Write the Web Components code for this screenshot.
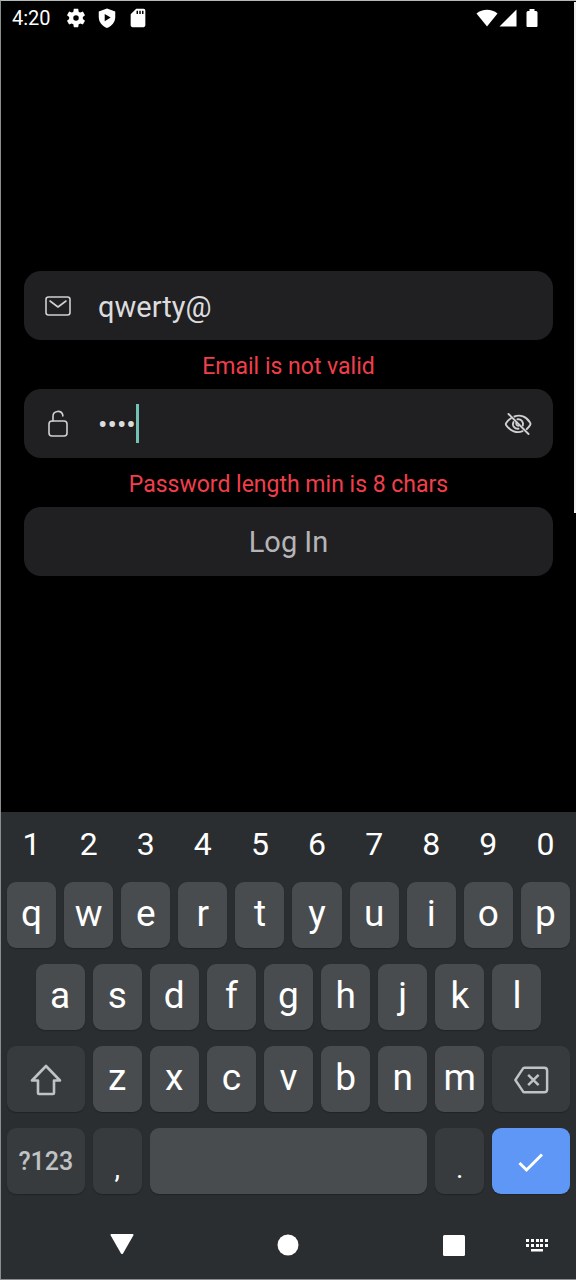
<!DOCTYPE html>
<html lang="en">
<head>
<meta charset="utf-8">
<meta name="viewport" content="width=device-width, initial-scale=1">
<title>Log In</title>
<style>
html, body { margin: 0; background: #000; }
body { font-family: Roboto, "Liberation Sans", sans-serif; color: #fff; }
</style>
</head>
<body>
<phone-screen>
  <status-bar slot="status" time="4:20"></status-bar>
  <login-form slot="main"></login-form>
  <soft-keyboard slot="keyboard"></soft-keyboard>
</phone-screen>

<script>
function define(name, html, setup) {
  const template = document.createElement('template');
  template.innerHTML = html;
  customElements.define(name, class extends HTMLElement {
    constructor() {
      super();
      this.attachShadow({ mode: 'open' }).append(template.content.cloneNode(true));
    }
    connectedCallback() { if (setup) setup(this, this.shadowRoot); }
  });
}

define('phone-screen', `
<style>
:host { display: flex; flex-direction: column; position: relative; box-sizing: border-box; min-height: 100vh; background: #000;
  border: solid #8a8e8f; border-width: 1px 0 1px 1px; border-top-color: #b4b9b8; }
main { flex: 1; display: flex; flex-direction: column; justify-content: center; padding: 0 23px; }
.edge { position: absolute; top: 1px; right: 0; width: 2px; height: 40%; background: #f1f0ee; }
</style>
<slot name="status"></slot>
<main><slot name="main"></slot></main>
<slot name="keyboard"></slot>
<div class="edge"></div>`);

define('status-bar', `
<style>
:host { display: flex; align-items: center; justify-content: space-between; height: 34px; padding: 0 38px 0 11px; color: #fff; }
div { display: flex; align-items: center; }
.left { gap: 9px; }
.time { font-size: 20px; line-height: 24px; margin-right: 5px; }
svg { display: block; fill: currentColor; }
.right { gap: 1px; }
.bat { margin-left: 8px; }
</style>
<div class="left">
  <span class="time"></span>
  <svg width="22" height="22" viewBox="0 0 24 24"><path d="M19.43 12.98c.04-.32.07-.64.07-.98s-.03-.66-.07-.98l2.11-1.65c.19-.15.24-.42.12-.64l-2-3.46c-.12-.22-.39-.3-.61-.22l-2.49 1c-.52-.4-1.08-.73-1.69-.98l-.38-2.65C14.46 2.18 14.25 2 14 2h-4c-.25 0-.46.18-.49.42l-.38 2.65c-.61.25-1.17.59-1.69.98l-2.49-1c-.23-.09-.49 0-.61.22l-2 3.46c-.13.22-.07.49.12.64l2.11 1.65c-.04.32-.07.65-.07.98s.03.66.07.98l-2.11 1.65c-.19.15-.24.42-.12.64l2 3.46c.12.22.39.3.61.22l2.49-1c.52.4 1.08.73 1.69.98l.38 2.65c.03.24.24.42.49.42h4c.25 0 .46-.18.49-.42l.38-2.65c.61-.25 1.17-.59 1.69-.98l2.49 1c.23.09.49 0 .61-.22l2-3.46c.12-.22.07-.49-.12-.64l-2.11-1.65zM12 15a3 3 0 1 1 0-6 3 3 0 0 1 0 6z"/></svg>
  <svg width="22" height="22" viewBox="0 0 24 24"><path fill-rule="evenodd" d="M12 1.500 21 5v6c0 5.600-3.800 10-9 12-5.200-2-9-6.400-9-12V5zM9.500 7.500v8l6.500-4z"/></svg>
  <svg width="22" height="22" viewBox="0 0 24 24"><path d="M18 2h-8L4.020 8 4 20c0 1.100.9 2 2 2h12c1.100 0 2-.9 2-2V4c0-1.100-.9-2-2-2zm-6 5.500h-1.600V4H12v3.500zm3 0h-1.600V4H15v3.500zm3 0h-1.600V4H18v3.500z"/></svg>
</div>
<div class="right">
  <svg width="22" height="20" viewBox="0 0 22 20"><path d="M11 18.500.500 5.500C6.500.600 15.500.600 21.500 5.500z"/></svg>
  <svg width="18" height="20" viewBox="0 0 18 20"><path d="M17.500 1.500v17H.500z"/></svg>
  <svg class="bat" width="12" height="20" viewBox="0 0 12 20"><path d="M3.500 1h5v2H10q1.500 0 1.500 1.500V18q0 1-1 1h-9q-1 0-1-1V4.500Q.5 3 2 3h1.500z"/></svg>
</div>`, (host, root) => {
  root.querySelector('.time').textContent = host.getAttribute('time');
});

define('login-field', `
<style>
:host { display: flex; align-items: center; box-sizing: border-box; height: 69px; border-radius: 17px; background: #202022; padding: 0 20px 0 19px; color: #dcdcde; }
label { display: flex; width: 30px; margin-right: 25px; justify-content: center; }
::slotted(svg) { display: block; }
input { font: 29px/36px Roboto, sans-serif; color: inherit; background: none; border: 0; outline: 0; padding: 2px 0 0; margin: 0; min-width: 0; flex: 1; }
:host([caret]) input { flex: none; field-sizing: content; font-size: 28px; }
.caret { display: none; width: 3px; height: 39px; background: #72c2b4; }
:host([caret]) .caret { display: block; }
.end { margin-left: auto; display: flex; }
</style>
<label for="field"><slot name="icon"></slot></label>
<input id="field">
<span class="caret"></span>
<div class="end"><slot name="end"></slot></div>`, (host, root) => {
  const input = root.querySelector('input');
  input.type = host.getAttribute('type');
  input.value = host.getAttribute('value');
  input.setAttribute('aria-label', host.getAttribute('label'));
});

define('login-form', `
<style>
:host { display: block; }
form { margin: 0; display: flex; flex-direction: column; }
p { margin: 0; box-sizing: border-box; height: 49px; padding-top: 4px; display: flex; align-items: center; justify-content: center; font-size: 23px; line-height: 28px; color: #f23e4b; }
.login { height: 69px; border: 0; border-radius: 17px; background: #202022; color: #b5b5b7; font: 29px/36px Roboto, sans-serif; padding: 0; }
svg { fill: none; stroke: #d0d0d2; stroke-width: 1.600; stroke-linecap: round; stroke-linejoin: round; display: block; }
.eye { border: 0; background: none; padding: 0; margin: 0; }
</style>
<form>
  <login-field type="text" value="qwerty@" label="Email">
    <svg slot="icon" width="28" height="24" viewBox="0 0 28 24"><rect x="2" y="3" width="24" height="18" rx="2.500"/><path d="m6 7 8 6 8-6"/></svg>
  </login-field>
  <p>Email is not valid</p>
  <login-field type="password" value="pass" label="Password" caret>
    <svg slot="icon" width="24" height="30" viewBox="0 0 24 30"><rect x="3" y="12" width="18" height="15" rx="3"/><path d="M7 12V7.500a5 5 0 0 1 9.800-1.500v1"/></svg>
    <button slot="end" class="eye" type="button" aria-label="Show password">
      <svg width="30" height="26" viewBox="0 0 30 26"><g stroke-width="1.900"><path d="M11.500 5.500C17 3.300 23.500 5.500 27 11.500c.7 1 .7 1.700 0 2.700-.9 1.500-2 2.700-3.200 3.800M8 7.200C6 8.500 4.300 10 3.200 12c-.5.700-.5 1.500 0 2.200C7 20 14 22.600 19.500 20.200"/><path d="M14.500 8.300c3.600-.5 6.300 2.700 5.300 6.200M10.500 11c-1.700 3.600 1 7 5 6.700M13.500 11.500c-.8 1.800.3 3.300 2 3.300"/><path d="m5.500 3 20 20"/></g></svg>
    </button>
  </login-field>
  <p>Password length min is 8 chars</p>
  <button class="login" type="button">Log In</button>
</form>`);

define('kb-key', `
<style>
:host { display: block; grid-column: span 2; }
:host([wide]) { grid-column: span 3; }
:host([space]) { grid-column: span 10; }
:host([indent]) { grid-column: 2 / span 2; }
button { display: flex; align-items: center; justify-content: center; box-sizing: border-box; width: calc(100% - 8px); height: 66px; margin: 0 4px; padding: 0 0 2px; border: 0; border-radius: 9px; background: #494c4e; box-shadow: 0 1px 1px #202427; color: #fff; font: 37px/44px Roboto, sans-serif; }
:host([digit]) button { height: 64px; background: none; box-shadow: none; font-size: 32px; padding: 0; }
:host([dark]) button { background: #373b3e; }
:host([wide]) button { color: #c0c2c4; font-size: 25px; font-weight: 500; padding: 2px 0 0; }
:host([low]) button { font-size: 28px; padding: 16px 0 0; }
:host([wide][enter]) button { background: #5e97f6; color: #fff; }
</style>
<button type="button"><slot></slot></button>`, (host, root) => {
  if (host.hasAttribute('label')) root.querySelector('button').setAttribute('aria-label', host.getAttribute('label'));
});

const keys = (text) => [...text].map((c) => `<kb-key>${c}</kb-key>`).join('');
const dots = [0, 5, 10, 14, 19].map((x) => `M${x} 1h3v3h-3zM${x} 6h3v3h-3z`).join('');

define('soft-keyboard', `
<style>
:host { display: block; background: #2a2e31; }
.row { display: grid; grid-template-columns: repeat(20, 1fr); padding: 0 2px; }
.digits { margin-bottom: 6px; }
.rows { display: grid; gap: 16px; }
svg { display: block; fill: none; stroke: currentColor; stroke-width: 3; stroke-linejoin: round; }
nav { display: grid; grid-template-columns: 57fr 128fr 204fr 128fr 38fr 20fr; align-items: center; justify-items: center; height: 68px; margin-top: 17px; }
nav button { border: 0; background: none; padding: 0; color: #fff; }
nav svg { fill: #fff; stroke: none; }
nav button:first-child { grid-column: 2; }
</style>
<div class="row digits">${[...'1234567890'].map((c) => `<kb-key digit>${c}</kb-key>`).join('')}</div>
<div class="rows">
  <div class="row">${keys('qwertyuiop')}</div>
  <div class="row"><kb-key indent>a</kb-key>${keys('sdfghjkl')}</div>
  <div class="row">
    <kb-key wide dark label="Shift"><svg width="34" height="34" viewBox="0 0 34 34"><path stroke-width="2.600" d="M17 3 3 17.500h6V30q0 1 1 1h14q1 0 1-1V17.500h6z"/></svg></kb-key>
    ${keys('zxcvbnm')}
    <kb-key wide dark label="Backspace"><svg width="36" height="30" viewBox="0 0 38 30"><path stroke-width="2.600" d="M12 2h21q3 0 3 3v20q0 3-3 3H12q-1 0-1.500-1L2.500 15l8-12Q11 2 12 2zM16 9.500l11 11m0-11-11 11"/></svg></kb-key>
  </div>
  <div class="row">
    <kb-key wide dark>?123</kb-key>
    <kb-key dark low>,</kb-key>
    <kb-key space label="Space"></kb-key>
    <kb-key dark low>.</kb-key>
    <kb-key wide enter label="Done"><svg width="28" height="22" viewBox="0 0 28 22"><path stroke-linejoin="miter" d="m2.500 12 7 7L25 3.500"/></svg></kb-key>
  </div>
</div>
<nav>
  <button type="button" aria-label="Hide keyboard"><svg width="24" height="22" viewBox="0 0 24 22"><path d="M1.500 0h21q1.500 0 .8 1.400L13 19.500q-1 1.200-2 0L.7 1.400Q0 0 1.500 0z"/></svg></button>
  <button type="button" aria-label="Home"><svg width="22" height="22" viewBox="0 0 22 22"><circle cx="11" cy="11" r="10.500"/></svg></button>
  <button type="button" aria-label="Recent apps"><svg width="22" height="22" viewBox="0 0 22 22"><rect x="0" y="1" width="22" height="21" rx="1.500"/></svg></button>
  <button type="button" aria-label="Switch keyboard"><svg width="22" height="14" viewBox="0 0 22 14"><path d="${dots}M5 11h12v2.500H5z"/></svg></button>
</nav>`);
</script>
</body>
</html>
